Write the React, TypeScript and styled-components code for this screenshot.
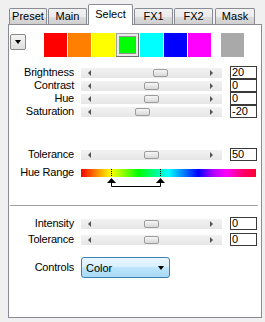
import React from 'react';
import styled, { createGlobalStyle } from 'styled-components';

const Global = createGlobalStyle`
  html, body { margin: 0; padding: 0; background: #f0f0f0; }
  body { font-family: "Liberation Sans", Arial, sans-serif; font-size: 11px; color: #000; }
`;

const Page = styled.div`
  width: 265px;
  height: 322px;
  box-sizing: border-box;
  padding-top: 4px;
  overflow: hidden;
`;

const TabBar = styled.div`
  display: flex;
  align-items: flex-end;
  gap: 1px;
  height: 20px;
  padding-left: 9px;
  position: relative;
  z-index: 1;
`;

const Tab = styled.div<{ $w: number; $active?: boolean; $ml?: number }>`
  box-sizing: border-box;
  width: ${(p) => p.$w}px;
  margin-left: ${(p) => p.$ml ?? 0}px;
  height: ${(p) => (p.$active ? 21 : 16)}px;
  margin-bottom: ${(p) => (p.$active ? -1 : 0)}px;
  border: 1px solid #898c95;
  border-bottom: none;
  border-radius: 2px 2px 0 0;
  background: ${(p) =>
    p.$active
      ? '#ffffff'
      : 'linear-gradient(#f2f2f2 0%, #ebebeb 50%, #dddddd 51%, #cfcfcf 100%)'};
  display: flex;
  justify-content: center;
  align-items: ${(p) => (p.$active ? 'flex-start' : 'center')};
  padding-top: ${(p) => (p.$active ? 3 : 0)}px;
  font-size: 11px;
  line-height: 13px;
`;

const Panel = styled.div`
  margin-left: 8px;
  width: 254px;
  height: 294px;
  box-sizing: border-box;
  border: 1px solid #898c95;
  background: #ffffff;
  display: flex;
  flex-direction: column;
`;

const SwatchRow = styled.div`
  display: flex;
  align-items: center;
  gap: 1px;
  height: 24px;
  margin-top: 8px;
  padding-left: 1px;
`;

const DropButton = styled.div`
  box-sizing: border-box;
  width: 16px;
  height: 16px;
  margin-right: 17px;
  align-self: flex-start;
  margin-top: 1px;
  border: 1px solid #8a8a8a;
  border-radius: 2px;
  background: linear-gradient(#f4f4f4, #dedede);
  display: flex;
  align-items: center;
  justify-content: center;
`;

const DownTri = styled.div`
  width: 0;
  height: 0;
  border-left: 3.5px solid transparent;
  border-right: 3.5px solid transparent;
  border-top: 4px solid #000;
`;

const Swatch = styled.div<{ $c: string; $ml?: number }>`
  width: 23px;
  height: 24px;
  margin-left: ${(p) => p.$ml ?? 0}px;
  background: ${(p) => p.$c};
`;

const SelSwatch = styled.div`
  box-sizing: border-box;
  width: 23px;
  height: 24px;
  border: 1px solid #a0a0a0;
  border-right-color: #707070;
  border-bottom-color: #707070;
  background: #e8e8e8;
  padding: 2px;
  display: flex;
`;

const SelInner = styled.div<{ $c: string }>`
  flex: 1;
  background: ${(p) => p.$c};
  border: 1px solid #909090;
`;

const Group = styled.div<{ $mt: number; $gap?: number }>`
  display: flex;
  flex-direction: column;
  gap: ${(p) => p.$gap ?? 0}px;
  margin-top: ${(p) => p.$mt}px;
`;

const Row = styled.div`
  display: grid;
  grid-template-columns: 65px 141px 27px;
  column-gap: 7px;
  align-items: center;
  height: 13px;
`;

const Label = styled.div`
  text-align: right;
  font-size: 11px;
  line-height: 13px;
  white-space: nowrap;
  letter-spacing: -0.2px;
`;

const Track = styled.div`
  position: relative;
  height: 10px;
  background: linear-gradient(#f2f2f2, #e6e6e6);
  display: flex;
  align-items: center;
  justify-content: space-between;
  padding: 0 9px 0 7px;
  box-sizing: border-box;
`;

const ArrowL = styled.div`
  width: 0;
  height: 0;
  border-top: 3px solid transparent;
  border-bottom: 3px solid transparent;
  border-right: 3px solid #555;
`;

const ArrowR = styled.div`
  width: 0;
  height: 0;
  border-top: 3px solid transparent;
  border-bottom: 3px solid transparent;
  border-left: 3px solid #555;
`;

const Thumb = styled.div`
  position: absolute;
  top: 1px;
  width: 15px;
  height: 8px;
  box-sizing: border-box;
  border: 1px solid #9c9c9c;
  border-radius: 2px;
  background: linear-gradient(#f6f6f6, #d8d8d8);
`;

const ValueBox = styled.div`
  box-sizing: border-box;
  width: 27px;
  height: 13px;
  margin-left: 1px;
  border: 1px solid #3a3a3a;
  background: #fff;
  font-size: 11px;
  line-height: 11px;
  padding-left: 1px;
`;

const HueBarWrap = styled.div`
  position: relative;
  height: 8px;
  width: 175px;
`;

const HueBar = styled.div`
  height: 8px;
  background: linear-gradient(
    to right,
    #ff0000 0%,
    #ff9900 10%,
    #ffff00 17%,
    #00ff00 33%,
    #00ff88 42%,
    #00ffff 50%,
    #0088ff 58%,
    #0000ff 67%,
    #aa00ff 75%,
    #ff00ff 83%,
    #ff0066 93%,
    #ff0033 100%
  );
`;

const MarkerSvg = styled.svg`
  position: absolute;
  left: 0;
  top: 0;
  overflow: visible;
`;

const HueRow = styled.div`
  display: grid;
  grid-template-columns: 65px 175px;
  column-gap: 7px;
  align-items: center;
  height: 13px;
  margin-top: 5px;
`;

const Divider = styled.div`
  margin: 26px 3px 0 1px;
  height: 1px;
  background: #a0a0a0;
  border-bottom: 1px solid #ffffff;
`;

const ControlsRow = styled.div`
  display: grid;
  grid-template-columns: 65px 89px;
  column-gap: 7px;
  align-items: center;
  margin-top: 11px;
`;

const Dropdown = styled.div`
  box-sizing: border-box;
  height: 21px;
  border: 1px solid #3c7fb1;
  border-radius: 3px;
  background: linear-gradient(#eaf6fd 0%, #d9f0fc 45%, #bee6fd 50%, #a7d9f5 100%);
  display: flex;
  align-items: center;
  justify-content: space-between;
  padding: 0 5px 0 4px;
  font-size: 11px;
`;

type SliderProps = { label: string; value: number; min: number; max: number };

const Slider = ({ label, value, min, max }: SliderProps) => {
  const left = 18 + ((value - min) / (max - min)) * 90;
  return (
    <Row>
      <Label>{label}</Label>
      <Track>
        <ArrowL />
        <ArrowR />
        <Thumb style={{ left }} />
      </Track>
      <ValueBox>{value}</ValueBox>
    </Row>
  );
};

const Marker = ({ x }: { x: number }) => (
  <g>
    <line x1={x + 0.5} y1={0} x2={x + 0.5} y2={8} stroke="#000" strokeDasharray="1 1" />
    <polygon points={`${x - 4},14 ${x + 5},14 ${x + 0.5},9`} fill="#000" />
  </g>
);

export default function App() {
  return (
    <Page>
      <Global />
      <TabBar>
        <Tab $w={38}>Preset</Tab>
        <Tab $w={39}>Main</Tab>
        <Tab $w={45} $active>
          Select
        </Tab>
        <Tab $w={39}>FX1</Tab>
        <Tab $w={39}>FX2</Tab>
        <Tab $w={40} $ml={1}>
          Mask
        </Tab>
      </TabBar>
      <Panel>
        <SwatchRow>
          <DropButton>
            <DownTri />
          </DropButton>
          <Swatch $c="#ff0000" />
          <Swatch $c="#ff8000" />
          <Swatch $c="#ffff00" />
          <SelSwatch>
            <SelInner $c="#00ff00" />
          </SelSwatch>
          <Swatch $c="#00ffff" />
          <Swatch $c="#0000ff" />
          <Swatch $c="#ff00ff" />
          <Swatch $c="#a9a9a9" $ml={9} />
        </SwatchRow>
        <Group $mt={9}>
          <Slider label="Brightness" value={20} min={-100} max={100} />
          <Slider label="Contrast" value={0} min={-100} max={100} />
          <Slider label="Hue" value={0} min={-100} max={100} />
          <Slider label="Saturation" value={-20} min={-100} max={100} />
        </Group>
        <Group $mt={30}>
          <Slider label="Tolerance" value={50} min={0} max={100} />
        </Group>
        <HueRow>
          <Label>Hue Range</Label>
          <HueBarWrap>
            <HueBar />
            <MarkerSvg width={175} height={18}>
              <Marker x={30} />
              <Marker x={79} />
              <path d="M30.5 14 V17.5 H79.5 V14" fill="none" stroke="#000" />
            </MarkerSvg>
          </HueBarWrap>
        </HueRow>
        <Divider />
        <Group $mt={10} $gap={3}>
          <Slider label="Intensity" value={0} min={-100} max={100} />
          <Slider label="Tolerance" value={0} min={-100} max={100} />
        </Group>
        <ControlsRow>
          <Label>Controls</Label>
          <Dropdown>
            <span>Color</span>
            <DownTri />
          </Dropdown>
        </ControlsRow>
      </Panel>
    </Page>
  );
}
